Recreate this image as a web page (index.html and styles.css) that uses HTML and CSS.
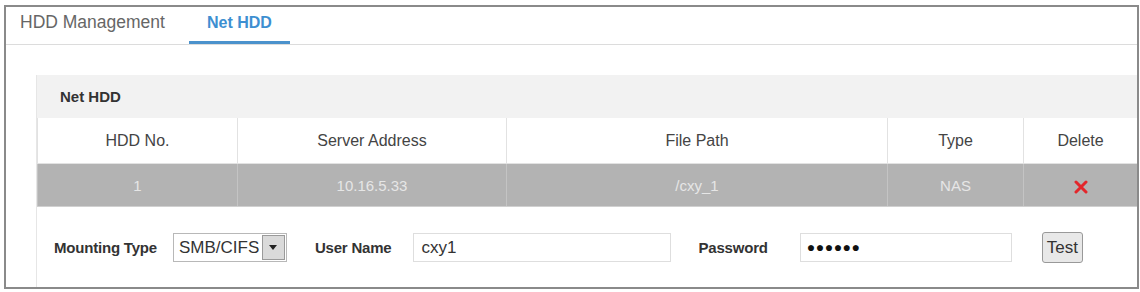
FILE: index.html
```html
<!DOCTYPE html>
<html lang="en">
<head>
  <meta charset="UTF-8" />
  <title>Net HDD</title>
  <link rel="stylesheet" href="styles.css">
</head>
<body>

  <div class="frame">
    <!-- tabs -->
    <div class="tabs">
      <span class="tab">HDD Management</span>
      <span class="tab active">Net HDD</span>
    </div>

    <div class="panel">
      <div class="panel-title">Net HDD</div>

      <table class="hdd-table">
        <colgroup>
          <col style="width:200px">
          <col style="width:269px">
          <col style="width:381px">
          <col style="width:136px">
          <col>
        </colgroup>
        <tr>
          <th>HDD No.</th>
          <th>Server Address</th>
          <th>File Path</th>
          <th>Type</th>
          <th>Delete</th>
        </tr>
        <tr class="selected">
          <td>1</td>
          <td>10.16.5.33</td>
          <td>/cxy_1</td>
          <td>NAS</td>
          <td>
            <svg class="del" width="14" height="14" viewBox="0 0 14 14">
              <path d="M2 2 L12 12 M12 2 L2 12" stroke="#e3262b" stroke-width="3" stroke-linecap="round"/>
            </svg>
          </td>
        </tr>
      </table>

      <!-- mounting -->
      <div class="mount-row">
        <label class="lbl">Mounting Type</label>
        <div class="select">
          <span class="select-val">SMB/CIFS</span>
          <span class="select-btn"><span class="arrow"></span></span>
        </div>
        <label class="lbl user-lbl">User Name</label>
        <div class="field user">cxy1</div>
        <label class="lbl pass-lbl">Password</label>
        <div class="field pass">&#9679;&#9679;&#9679;&#9679;&#9679;&#9679;</div>
        <button class="test-btn">Test</button>
      </div>
    </div>
  </div>

</body>
</html>
```

FILE: styles.css
```css
body {
  margin: 0;
  font-family: "Liberation Sans", Arial, sans-serif;
  background-color: #fff;
}
.frame {
  box-sizing: border-box;
  width: 1135px;
  height: 284px;
  margin: 5px 0 0 4px;
  border: 2px solid #8a8a8a;
  background-color: #fff;
  overflow: hidden;
}
.tabs {
  display: flex;
  height: 37px;
  border-bottom: 1px solid #dcdcdc;
  padding-left: 14px;
}
.tab {
  font-size: 17.5px;
  color: #666;
  line-height: 31px;
}
.tab.active {
  margin-left: 24px;
  width: 101px;
  text-align: center;
  color: #3d8fd1;
  font-weight: bold;
  font-size: 16px;
  border-bottom: 3px solid #4b92cc;
  height: 34px;
}
.panel {
  margin: 30px 0 0 30px;
  border-left: 1px solid #e6e6e6;
  height: 220px;
}
.panel-title {
  height: 43px;
  line-height: 44px;
  background-color: #f2f2f2;
  padding-left: 23px;
  font-size: 15px;
  font-weight: bold;
  color: #333;
}
.hdd-table {
  width: 1101px;
  border-collapse: collapse;
  table-layout: fixed;
}
.hdd-table th {
  height: 43px;
  font-weight: normal;
  font-size: 16px;
  color: #444;
  border: 1px solid #e2e2e2;
  border-top: 0;
}
.hdd-table td {
  height: 40px;
  text-align: center;
  background-color: #b3b3b3;
  color: #e6e6e6;
  font-size: 15px;
  border-left: 1px solid #c4c4c4;
  border-right: 1px solid #c4c4c4;
  border-bottom: 1px solid #d0d0d0;
}
.del {
  vertical-align: middle;
}
.mount-row {
  display: flex;
  align-items: center;
  padding: 25px 0 0 17px;
}
.lbl {
  font-size: 15px;
  font-weight: bold;
  color: #333;
  letter-spacing: -0.2px;
}
.select {
  display: flex;
  margin-left: 16px;
  width: 114px;
  height: 29px;
  border: 1px solid #b8b8b8;
  box-sizing: border-box;
}
.select-val {
  flex: 1;
  font-size: 17px;
  line-height: 27px;
  padding-left: 5px;
  color: #333;
}
.select-btn {
  width: 21px;
  margin: 1px;
  background-color: #dadada;
  border: 1px solid #9a9a9a;
  display: flex;
  align-items: center;
  justify-content: center;
}
.arrow {
  border-left: 4px solid transparent;
  border-right: 4px solid transparent;
  border-top: 5px solid #222;
}
.user-lbl {
  margin-left: 28px;
}
.pass-lbl {
  margin-left: 28px;
}
.field {
  box-sizing: border-box;
  height: 29px;
  border: 1px solid #dedede;
  font-size: 17px;
  color: #333;
  line-height: 27px;
  padding-left: 8px;
}
.field.user {
  width: 258px;
  margin-left: 21px;
}
.field.pass {
  width: 212px;
  margin-left: 32px;
  padding-left: 6px;
  font-size: 14px;
  letter-spacing: 0.5px;
  color: #111;
}
.test-btn {
  margin-left: 30px;
  width: 41px;
  height: 31px;
  padding: 0;
  font-family: "Liberation Sans", Arial, sans-serif;
  font-size: 17px;
  color: #333;
  background-color: #e8e8e8;
  border: 1px solid #999;
  border-radius: 3px;
}
```
